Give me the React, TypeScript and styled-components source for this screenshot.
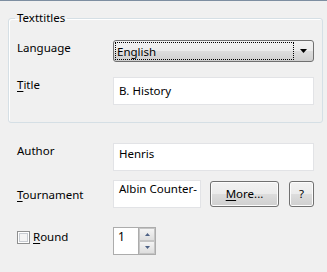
import React from "react";
import styled, { createGlobalStyle } from "styled-components";

const Global = createGlobalStyle`
  html, body { margin: 0; padding: 0; background: #f0f0f0; }
  body { font-family: "Noto Sans", "Open Sans", sans-serif; font-size: 11.5px; color: #000; }
  * { box-sizing: border-box; }
`;

const Page = styled.div`
  width: 327px;
  height: 272px;
  border-top: 1px solid #7d8ea1;
  padding: 0 4px 0 8px;
  background: #f0f0f0;
  overflow: hidden;
`;

const GroupBox = styled.fieldset`
  margin: 9px 0 0;
  border: 1px solid #d5dfe5;
  border-radius: 3px;
  box-shadow: inset 1px 1px 0 #fff;
  padding: 14px 8px 17px 8px;
  min-width: 0;
`;

const Legend = styled.legend`
  padding: 0 2px;
  margin-left: -2px;
  line-height: 16px;
  height: 16px;
`;

const FormGrid = styled.div<{ $gap: number }>`
  display: grid;
  grid-template-columns: 96px 201px;
  row-gap: ${(p) => p.$gap}px;
  align-items: start;
`;

const Lower = styled.div`
  display: grid;
  grid-template-columns: 96px 201px;
  padding-left: 9px;
  margin-top: 20px;
  align-items: start;
`;

const Label = styled.div<{ $top?: number; $mb?: number }>`
  line-height: 16px;
  padding-top: ${(p) => p.$top ?? 0}px;
  margin-bottom: ${(p) => p.$mb ?? 0}px;
  display: flex;
  align-items: center;
  white-space: nowrap;
`;

const U = styled.span`
  text-decoration: underline;
  text-underline-offset: 2px;
`;

const Combo = styled.div`
  height: 22px;
  width: 201px;
  border: 1px solid #707070;
  border-radius: 3px;
  background: linear-gradient(#f2f2f2 0%, #ebebeb 50%, #dddddd 50%, #cfcfcf 100%);
  padding: 1px;
  display: flex;
  align-items: stretch;
`;

const FocusBox = styled.div`
  width: 179px;
  border: 1px dotted #000;
  padding: 1px 0 0 1px;
  line-height: 16px;
`;

const ArrowBox = styled.div`
  flex: 1;
  display: flex;
  align-items: center;
  justify-content: center;
  padding-left: 1px;
`;

const TextField = styled.div<{ $w: number; $pt: number; $mb?: number }>`
  width: ${(p) => p.$w}px;
  height: 28px;
  background: #fff;
  border: 1px solid #e2e3e6;
  padding: ${(p) => p.$pt}px 5px 0 5px;
  line-height: 16px;
  white-space: nowrap;
  overflow: hidden;
  margin-bottom: ${(p) => p.$mb ?? 0}px;
`;

const Row = styled.div<{ $mb?: number }>`
  display: flex;
  align-items: flex-start;
  margin-bottom: ${(p) => p.$mb ?? 0}px;
`;

const Button = styled.div<{ $w: number; $ml: number }>`
  width: ${(p) => p.$w}px;
  height: 26px;
  margin-top: 1px;
  margin-left: ${(p) => p.$ml}px;
  border: 1px solid #707070;
  border-radius: 3px;
  background: linear-gradient(#f2f2f2 0%, #ebebeb 50%, #dddddd 50%, #cfcfcf 100%);
  box-shadow: inset 0 0 0 1px #fcfcfc;
  display: flex;
  align-items: center;
  justify-content: center;
  line-height: 16px;
`;

const CheckBox = styled.span`
  width: 13px;
  height: 13px;
  border: 1px solid #8e8f8f;
  background: #f4f4f4;
  box-shadow: inset 0 0 0 1px #fff, inset 0 0 0 2px #c8ccd2;
  margin-right: 3px;
  margin-top: 1px;
`;

const Spin = styled.div`
  width: 43px;
  height: 28px;
  border: 1px solid #acacac;
  background: #fff;
  display: flex;
`;

const SpinText = styled.div`
  flex: 1;
  padding: 1px 0 0 4px;
  line-height: 16px;
  font-size: 12px;
`;

const SpinButtons = styled.div`
  width: 17px;
  display: flex;
  flex-direction: column;
  border-left: 1px solid #acacac;
`;

const SpinBtn = styled.div`
  flex: 1;
  border: 1px solid #c5c5c5;
  background: linear-gradient(#f4f4f4, #dedede);
  display: flex;
  align-items: center;
  justify-content: center;
`;

const Arrow = ({ up }: { up?: boolean }) => (
  <svg width="7" height="4" viewBox="0 0 7 4">
    <polygon points={up ? "0,4 7,4 3.5,0" : "0,0 7,0 3.5,4"} fill="#000" />
  </svg>
);

const SmallArrow = ({ up }: { up?: boolean }) => (
  <svg width="5" height="3" viewBox="0 0 5 3">
    <polygon points={up ? "0,3 5,3 2.5,0" : "0,0 5,0 2.5,3"} fill="#4d6185" />
  </svg>
);

export default function App() {
  return (
    <>
      <Global />
      <Page>
        <GroupBox>
          <Legend>Texttitles</Legend>
          <FormGrid $gap={15}>
            <Label $top={0}>Language</Label>
            <Combo>
              <FocusBox>English</FocusBox>
              <ArrowBox>
                <Arrow />
              </ArrowBox>
            </Combo>
            <Label>
              <span>
                <U>T</U>itle
              </span>
            </Label>
            <TextField $w={201} $pt={5}>
              B. History
            </TextField>
          </FormGrid>
        </GroupBox>
        <Lower>
          <Label>Author</Label>
          <TextField $w={201} $pt={2} $mb={9}>
            Henris
          </TextField>
          <Label $top={7}>
            <span>
              <U>T</U>ournament
            </span>
          </Label>
          <Row $mb={19}>
            <TextField $w={88} $pt={0}>
              Albin Counter-
            </TextField>
            <Button $w={69} $ml={9}>
              <span>
                <U>M</U>ore...
              </span>
            </Button>
            <Button $w={25} $ml={10}>
              ?
            </Button>
          </Row>
          <Label $top={2}>
            <CheckBox />
            <span>
              <U>R</U>ound
            </span>
          </Label>
          <Spin>
            <SpinText>1</SpinText>
            <SpinButtons>
              <SpinBtn>
                <SmallArrow up />
              </SpinBtn>
              <SpinBtn>
                <SmallArrow />
              </SpinBtn>
            </SpinButtons>
          </Spin>
        </Lower>
      </Page>
    </>
  );
}
